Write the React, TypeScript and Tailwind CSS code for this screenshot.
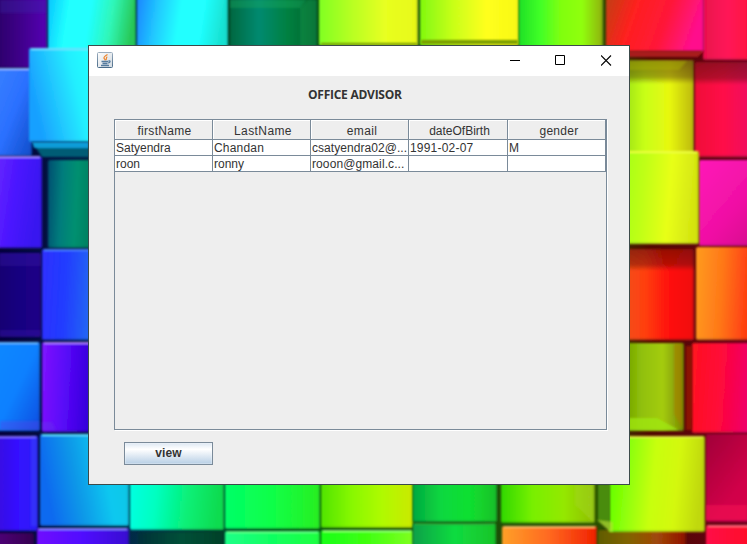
import type { ReactNode } from "react";

type Tile = {
  x: number;
  y: number;
  w: number;
  h: number;
  colors: string[];
  tilt?: number;
  top?: string;
  shade?: boolean;
};

// Wallpaper blocks, listed from back to front.
const tiles: Tile[] = [
  { x: -4, y: -4, w: 51, h: 72, colors: ["#2b0068", "#40008c", "#5606b4"] },
  { x: 48, y: -4, w: 88, h: 56, colors: ["#08c4ff", "#20ffff", "#20ffff", "#30f7b8", "#28c858"], tilt: 0.1 },
  { x: 137, y: -4, w: 91, h: 56, colors: ["#1e84ff", "#20c8ff", "#20ffff", "#20ffff", "#18e0d0"], tilt: 0.1 },
  { x: 230, y: -4, w: 87, h: 56, colors: ["#006840", "#008a70", "#008040", "#00602c"] },
  { x: 319, y: -4, w: 99, h: 50, colors: ["#80ff20", "#b8ff20", "#e8ff20", "#e8f818"] },
  { x: 420, y: -4, w: 99, h: 50, colors: ["#80f810", "#c8ff18", "#ffff20", "#f8f810"] },
  { x: 519, y: -4, w: 84, h: 56, colors: ["#20e028", "#40ff28", "#80ff10", "#90ff10", "#90b010"] },
  { x: 703, y: -4, w: 48, h: 64, colors: ["#e8104c", "#ff1858", "#ff1040"] },
  { x: 606, y: -4, w: 98, h: 56, colors: ["#c04010", "#ff2020", "#ff1838", "#ff108c"], tilt: 0.2 },
  { x: -4, y: 68, w: 36, h: 88, colors: ["#3880ff", "#2b70ff", "#104cc8"], tilt: 1, top: "#92b8ff" },
  { x: 48, y: 160, w: 45, h: 88, colors: ["#004d70", "#007c7c", "#009070", "#008060"], tilt: 0.1 },
  { x: 29, y: 48, w: 62, h: 94, colors: ["#18a0ff", "#20c8ff", "#20f0ff", "#20ffff"], tilt: -0.35, top: "#70e0ff" },
  { x: -4, y: 156, w: 46, h: 92, colors: ["#6828ff", "#4a14ff", "#3814f0"], tilt: 0.3, top: "#a088ff" },
  { x: -4, y: 253, w: 45, h: 84, colors: ["#180070", "#160080", "#200088"] },
  { x: 42, y: 249, w: 49, h: 91, colors: ["#3030ff", "#203cff", "#2064f4"], tilt: 0.1, top: "#4a80ff" },
  { x: -4, y: 342, w: 44, h: 89, colors: ["#1088ff", "#1080ff", "#104ce0"], tilt: 1, top: "#60b8ff" },
  { x: 42, y: 342, w: 50, h: 90, colors: ["#8014ff", "#5808f8", "#3400da"], tilt: 0.1, top: "#b078ff" },
  { x: -4, y: 436, w: 42, h: 95, colors: ["#3810e0", "#3410ff", "#2c20f8"], top: "#8068ff" },
  { x: 40, y: 434, w: 89, h: 92, colors: ["#106af0", "#0b98e8", "#08c8f0", "#10c8e0"], tilt: -0.2, top: "#58deff" },
  { x: 130, y: 440, w: 94, h: 90, colors: ["#00ffe8", "#00ffc0", "#08f078", "#10dc50"], tilt: 0.1 },
  { x: 225, y: 440, w: 95, h: 89, colors: ["#00ff68", "#10ff48", "#28ef20"] },
  { x: 321, y: 440, w: 92, h: 88, colors: ["#50e400", "#88f800", "#b0fa00", "#cbe900"] },
  { x: 413, y: 440, w: 84, h: 82, colors: ["#00a840", "#10d840", "#10e030", "#18c028"] },
  { x: -4, y: 533, w: 38, h: 16, colors: ["#500078", "#340050"] },
  { x: 37, y: 528, w: 92, h: 20, colors: ["#7010ff", "#5010ff", "#3810d0"], top: "#8884ff" },
  { x: 138, y: 532, w: 86, h: 16, colors: ["#00303a", "#005038", "#004028"] },
  { x: 225, y: 531, w: 95, h: 18, colors: ["#20ff88", "#10ff60", "#20ff40"], top: "#60ff88" },
  { x: 321, y: 530, w: 92, h: 20, colors: ["#18ff18", "#40ff10", "#80ff20"], top: "#90ff70" },
  { x: 413, y: 523, w: 83, h: 24, colors: ["#10a048", "#10dc40", "#18c428"], top: "#28a838" },
  { x: 501, y: 450, w: 94, h: 73, colors: ["#30d800", "#78f000", "#94e800", "#90bd08"] },
  { x: 502, y: 526, w: 95, h: 22, colors: ["#ffa028", "#ff6820", "#f02000"], top: "#f8b860" },
  { x: 598, y: 530, w: 88, h: 20, colors: ["#605c00", "#806400", "#a04808", "#901000"] },
  { x: 620, y: 60, w: 74, h: 100, colors: ["#94dc10", "#c8ff18", "#e8f810", "#bcb810"], shade: true },
  { x: 695, y: 62, w: 56, h: 95, colors: ["#f01038", "#ff1048", "#f01060"], shade: true },
  { x: 699, y: 160, w: 52, h: 86, colors: ["#ff18b8", "#f010a4", "#c80880"], tilt: 1.4 },
  { x: 620, y: 151, w: 79, h: 93, colors: ["#a0ff10", "#c0ff18", "#e8ff18", "#d4e410"], tilt: 0.1, top: "#efff40" },
  { x: 620, y: 249, w: 74, h: 91, colors: ["#f05018", "#ff4010", "#ff1008", "#f01010"], shade: true },
  { x: 696, y: 247, w: 55, h: 93, colors: ["#ff9c20", "#ff7818", "#ff3c10"], tilt: 0.1 },
  { x: 620, y: 343, w: 64, h: 88, colors: ["#689800", "#90c008", "#a4cc10", "#788800"] },
  { x: 692, y: 343, w: 59, h: 90, colors: ["#ff1420", "#ff0838", "#f00068"], tilt: 0.1 },
  { x: 706, y: 434, w: 45, h: 88, colors: ["#a00038", "#d00048", "#e00050"], tilt: 1.5 },
  { x: 706, y: 525, w: 45, h: 24, colors: ["#ff1048", "#ff1028"], top: "#ff6078" },
  { x: 609, y: 436, w: 96, h: 96, colors: ["#58ff00", "#90ff08", "#c8ff08", "#d4f808", "#c0d80c"], tilt: 0.1, top: "#e0e840" },
];

function Wallpaper() {
  return (
    <svg className="absolute inset-0" width="747" height="544" viewBox="0 0 747 544" aria-hidden="true">
      <defs>
        <linearGradient id="base" x1="0" x2="1">
          <stop offset="0" stopColor="#04003c" />
          <stop offset=".2" stopColor="#003048" />
          <stop offset=".35" stopColor="#004818" />
          <stop offset=".8" stopColor="#285000" />
          <stop offset=".87" stopColor="#500800" />
          <stop offset="1" stopColor="#680018" />
        </linearGradient>
        <linearGradient id="depth" x2="0" y2="1">
          <stop offset="0" stopColor="#300000" stopOpacity=".5" />
          <stop offset=".17" stopColor="#300000" stopOpacity=".35" />
          <stop offset=".24" stopColor="#300000" stopOpacity="0" />
        </linearGradient>
        <filter id="soften" x="-5%" y="-5%" width="110%" height="110%">
          <feGaussianBlur stdDeviation=".9" />
        </filter>
        {tiles.map((t, i) => (
          <linearGradient key={i} id={`tile-${i}`} x1="0" y1={Math.max(0, -(t.tilt ?? 0))} x2="1" y2={Math.max(0, t.tilt ?? 0)}>
            {t.colors.map((c, n) => (
              <stop key={n} offset={n / (t.colors.length - 1)} stopColor={c} />
            ))}
          </linearGradient>
        ))}
      </defs>
      <rect width="747" height="544" fill="url(#base)" />
      {tiles.map((t, i) => (
        <g key={i} filter="url(#soften)">
          <rect x={t.x} y={t.y} width={t.w} height={t.h} rx="2" fill={`url(#tile-${i})`} />
          {t.shade && <rect x={t.x} y={t.y} width={t.w} height={t.h} fill="url(#depth)" />}
          <path d={`M${t.x + 1} ${t.y + t.h - 1}h${t.w - 2}v${-t.h + 2}`} fill="none" stroke="#002030" strokeOpacity=".12" strokeWidth="2" />
          {t.top && <path d={`M${t.x + 2} ${t.y + 1}h${t.w - 4}`} stroke={t.top} strokeWidth="2" />}
        </g>
      ))}
      <g filter="url(#soften)">
        <path d="M0 0h46v13H0z" fill="#3828b0" opacity=".3" />
        <path d="M32 142h57v6H34z" fill="#109cd8" />
        <path d="M36 148h53v9H42z" fill="#005c74" />
        <path d="M0 253h41v13H0zM0 330h41v7H0z" fill="#4020b0" opacity=".3" />
        <path d="M230 0h76l-6 8h-70z" fill="#20b060" opacity=".35" />
        <path d="M300 8l8-8h9v48h-17z" fill="#20a050" opacity=".35" />
        <path d="M321 43h96v2h-96zM421 40h97v4h-97z" fill="#789c00" />
        <path d="M620 51h84l-6 6h-78z" fill="#a81c1c" />
        <path d="M629 61h58l-8 9h-50z" fill="#b0b800" opacity=".4" />
        <path d="M629 418h28l22 12h-50z" fill="#a0e810" opacity=".75" />
        <path d="M674 344h8v84l-8-14z" fill="#b07808" opacity=".5" />
        <path d="M686 346h6v84h-6z" fill="#a01808" opacity=".7" />
        <path d="M575 485h18v37l-18-17z" fill="#a4d820" opacity=".45" />
        <path d="M598 484h12v46l-12-9z" fill="#488c08" />
        <path d="M597 520l13 12h3v-10z" fill="#c0e038" opacity=".6" />
        <path d="M706 505h41v15h-41z" fill="#ff1058" opacity=".45" />
        <path d="M0 421h39v9H0zM42 422h10l4 8H42z" fill="#6040e8" opacity=".35" />
        <path d="M31 436h6v90h-6z" fill="#4060ff" opacity=".3" />
      </g>
    </svg>
  );
}

function JavaIcon() {
  return (
    <svg width="16" height="16" viewBox="0 0 16 16" aria-label="Java">
      <defs>
        <linearGradient id="java-frame" x2="0" y2="1">
          <stop stopColor="#9caebf" />
          <stop offset="1" stopColor="#496b89" />
        </linearGradient>
        <linearGradient id="java-face" x2="1" y2="1">
          <stop stopColor="#fdfdfd" />
          <stop offset="1" stopColor="#d2dae1" />
        </linearGradient>
      </defs>
      <rect x=".5" y=".5" width="15" height="15" rx="1" fill="url(#java-face)" stroke="url(#java-frame)" />
      <path d="M10.5 2.5C8 4 6.5 5 7 6.2s1.7 1.2.8 2.3M10.3 4.8C8.7 5.8 9.8 6.6 9 8" fill="none" stroke="#ee852c" strokeWidth="1.2" />
      <path d="M4.5 9.5h6.8M5.5 11.5h5M4 13.5h8M11.5 9c2-.7 2.2 1.5-.2 2" fill="none" stroke="#557b9e" strokeWidth="1.3" />
    </svg>
  );
}

function HeaderCell({ children, spacing }: { children: ReactNode; spacing: string }) {
  return (
    <div className={`flex h-5 items-center justify-center border-r border-b border-[#7a8a99] bg-[#eee] pt-[3px] shadow-[inset_1px_1px_0_#fff] ${spacing}`}>
      {children}
    </div>
  );
}

function Cell({ children, spacing = "" }: { children?: ReactNode; spacing?: string }) {
  return (
    <div className={`h-4 overflow-hidden border-r border-b border-[#7a8a99] bg-white pl-px leading-4 whitespace-nowrap ${spacing}`}>
      {children}
    </div>
  );
}

export default function App() {
  return (
    <div className="relative h-[544px] w-[747px] overflow-hidden font-['Liberation_Sans',Arial,sans-serif] text-xs text-[#333]">
      <Wallpaper />
      <main className="absolute top-[45px] left-[88px] flex h-[440px] w-[542px] flex-col border border-[#3c4a4a] bg-[#eee]">
        <header className="flex h-[30px] shrink-0 items-start justify-between bg-white pt-[6px] pr-[17px] pl-2">
          <JavaIcon />
          <div className="flex gap-[35px] pt-[3px]">
            <svg width="11" height="11" aria-label="Minimize"><path d="M1 5.5h10" stroke="#000" /></svg>
            <svg width="11" height="11" aria-label="Maximize"><path d="M.5.5h9v9h-9z" fill="none" stroke="#000" /></svg>
            <svg width="11" height="11" aria-label="Close"><path d="M0 .5l10 10M10 .5l-10 10" stroke="#000" strokeWidth="1.1" /></svg>
          </div>
        </header>
        <h1 className="mt-[10px] ml-[219px] h-[18px] font-['Open_Sans','Noto_Sans',sans-serif] text-[12px] leading-[18px] font-bold tracking-[-0.25px] whitespace-nowrap">
          OFFICE ADVISOR
        </h1>
        <section className="mt-[15px] ml-[25px] h-[311px] w-[493px] border border-[#7a8a99] shadow-[1px_1px_0_#fff]">
          <div className="grid w-[491px] grid-cols-[98px_98px_98px_99px_98px]">
            <HeaderCell spacing="tracking-[0.3px] pl-[2px]">firstName</HeaderCell>
            <HeaderCell spacing="tracking-[0.4px] pl-[3px]">LastName</HeaderCell>
            <HeaderCell spacing="tracking-[0.4px] pl-[5px]">email</HeaderCell>
            <HeaderCell spacing="tracking-[0px] pl-[3px]">dateOfBirth</HeaderCell>
            <HeaderCell spacing="tracking-[0.3px] pl-[5px]">gender</HeaderCell>
            <Cell spacing="tracking-[0px]">Satyendra</Cell>
            <Cell spacing="tracking-[0.2px]">Chandan</Cell>
            <Cell spacing="tracking-[0.05px]">csatyendra02@...</Cell>
            <Cell spacing="tracking-[0.2px] pl-[2px]">1991-02-07</Cell>
            <Cell>M</Cell>
            <Cell>roon</Cell>
            <Cell spacing="tracking-[0px]">ronny</Cell>
            <Cell spacing="tracking-[0.1px]">rooon@gmail.c...</Cell>
            <Cell />
            <Cell />
          </div>
        </section>
        <button className="mt-3 ml-[35px] h-[23px] w-[89px] border border-[#7a8a99] bg-linear-to-b from-[#dde8f3] via-white via-30% to-[#b8cfe5] text-xs leading-[21px] font-bold tracking-[0.1px] shadow-[inset_0_0_0_1px_#ffffff44]">
          view
        </button>
      </main>
    </div>
  );
}
